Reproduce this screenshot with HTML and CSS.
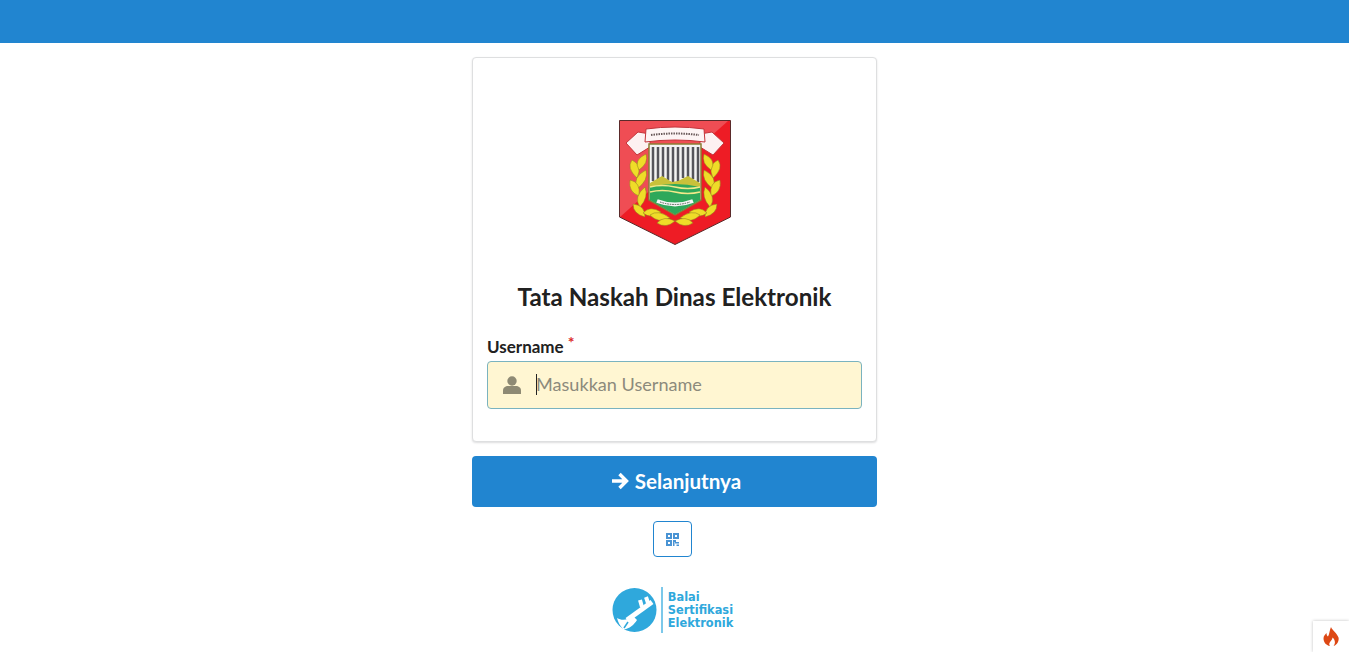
FILE: index.html
```html
<!DOCTYPE html>
<html lang="en">
  <head>
    <meta charset="UTF-8" />
    <meta name="viewport" content="width=device-width, initial-scale=1.0" />
    <title>Tata Naskah Dinas Elektronik</title>
    <link rel="stylesheet" href="styles.css">
  </head>
  <body>
    <div class="topbar"></div>
    <div class="container">
      <div class="card">
        <div class="crest">
          <svg width="150" height="150" viewBox="0 0 150 150">
            <path d="M19.500 15.500H130.500V112L75 139.500 19.500 112Z" fill="#ee1c25" stroke="#5a2a2a" stroke-width="1"/>
            <path d="M20 16H128L20 112Z" fill="#ef4d54"/>
            <!-- ribbon -->
            <path d="M26 38L38 27 50 29 50 42 37 50Z" fill="#fdf1f1" stroke="#c2343a" stroke-width="1"/>
            <path d="M124 38L112 27 100 29 100 42 113 50Z" fill="#fdf1f1" stroke="#c2343a" stroke-width="1"/>
            <path d="M46 24Q75 20 104 24L105 37Q75 33 45 37Z" fill="#fdf4f4" stroke="#c2343a" stroke-width="1"/>
            <path d="M51 30Q75 27 99 30" fill="none" stroke="#6a5a5a" stroke-width="2" stroke-dasharray="1.500 1"/>
            <!-- inner shield -->
            <path d="M49 39H101V95L75 110 49 95Z" fill="#f4f4f4" stroke="#8a7d35" stroke-width="1.500"/>
            <path d="M53 42V76M58 42V74M63 42V72M68 42V75M73 42V77M78 42V77M83 42V73M88 42V72M93 42V74M98 42V77" stroke="#55555c" stroke-width="2.500"/>
            <path d="M50 78L62 71 72 77 78 76 88 71 100 78V84H50Z" fill="#c9c13a"/>
            <path d="M50 82Q75 76 100 82V95L75 109.500 50 95Z" fill="#2ea85a"/>
            <path d="M50 82Q62 79 75 82T100 82M50 87Q62 84 75 87T100 87" fill="none" stroke="#f3e98a" stroke-width="1.500"/>
            <path d="M57 96Q75 103 93 96" fill="none" stroke="#f5f5f5" stroke-width="4"/>
            <path d="M60 97Q75 102 90 97" fill="none" stroke="#4a5a4a" stroke-width="1" stroke-dasharray="1.500 1"/>
            <!-- leaves -->
            <g fill="#efdc28" stroke="#8a7a20" stroke-width="0.500">
              <path d="M37 73Q26 63 32 55 43 60 37 73Z"/>
              <path d="M39 65Q33 55 46 49 49 58 39 65Z"/>
              <path d="M37 84Q32 72 46 65 49 75 37 84Z"/>
              <path d="M39 91Q28 87 30 75 41 77 39 91Z"/>
              <path d="M40 102Q33 92 45 82 49 92 40 102Z"/>
              <path d="M45 112Q33 109 33 99 45 100 45 112Z"/>
              <path d="M113 73Q124 63 118 55 107 60 113 73Z"/>
              <path d="M111 65Q117 55 104 49 101 58 111 65Z"/>
              <path d="M113 84Q118 72 104 65 101 75 113 84Z"/>
              <path d="M111 91Q122 87 120 75 109 77 111 91Z"/>
              <path d="M110 102Q117 92 105 82 101 92 110 102Z"/>
              <path d="M105 112Q117 109 117 99 105 100 105 112Z"/>
              <path d="M43 108Q50 100 61 107 52 115 43 108Z"/>
              <path d="M50 110Q58 104 70 113 58 119 50 110Z"/>
              <path d="M57 118Q64 110 75 116 66 124 57 118Z"/>
              <path d="M107 108Q100 100 89 107 98 115 107 108Z"/>
              <path d="M100 110Q92 104 80 113 92 119 100 110Z"/>
              <path d="M93 118Q86 110 75 116 84 124 93 118Z"/>
            </g>
          </svg>
        </div>
        <h1>Tata Naskah Dinas Elektronik</h1>
        <label class="field-label" for="username">Username<span class="required">*</span></label>
        <div class="input-wrap">
          <svg class="input-icon" width="18" height="18" viewBox="0 0 18 18">
            <circle cx="9" cy="5" r="4.700" fill="#8e8a74"/>
            <path d="M0 18V14.500C0 11.500 2.500 10 5 10H13C15.500 10 18 11.500 18 14.500V18Z" fill="#8e8a74"/>
          </svg>
          <input id="username" type="text" placeholder="Masukkan Username" autofocus />
          <span class="caret"></span>
        </div>
      </div>

      <button class="next-btn">
        <svg width="18" height="18" viewBox="0 0 18 18">
          <path d="M1 9H15M8.500 2L15.500 9 8.500 16" fill="none" stroke="#fff" stroke-width="3.400"/>
        </svg>
        Selanjutnya
      </button>

      <button class="qr-btn" aria-label="QR">
        <svg width="13" height="13" viewBox="0 0 13 13">
          <path d="M0 0H6V6H0ZM2 2V4H4V2ZM7 0H13V6H7ZM9 2V4H11V2ZM0 7H6V13H0ZM2 9V11H4V9Z" fill="#4a94d4" fill-rule="evenodd"/>
          <path d="M7 7H10V9H13V10.500H9V9H8.500V13H7ZM10.500 11.500H13V13H10.500Z" fill="#4a94d4"/>
        </svg>
      </button>

      <div class="bsre">
        <svg width="45" height="46" viewBox="0 0 45 46">
          <circle cx="22.500" cy="23" r="22" fill="#2fa8dc"/>
          <path d="M15 33L40 15" stroke="#fff" stroke-width="5"/>
          <path d="M30 20L28 13M36 16L34 10" stroke="#fff" stroke-width="4"/>
          <path d="M5 31C10 34 16 33 21 29L25 33C22 38 16 43 11 42 8 39 6 35 5 31Z" fill="#fff"/>
          <path d="M12 41L16 35" stroke="#2fa8dc" stroke-width="1.500"/>
        </svg>
        <div class="bsre-line"></div>
        <div class="bsre-text">Balai<br>Sertifikasi<br>Elektronik</div>
      </div>
    </div>

    <div class="corner-badge">
      <svg width="16" height="19" viewBox="0 0 16 19">
        <path d="M8 0C9 3 14 6 15.500 10.500 16.500 15 13 18.500 10.500 19 12.500 16.500 12.500 13 9.500 10.500 9.500 13 7.500 13.500 6.500 16 6 17.500 6.500 18.500 7 19 3 18.500 0.500 15 0.500 11.500 0.500 9 2 7.500 3.500 6 3.500 8 4 9 5 9.500 6.500 7 6.500 3 8 0Z" fill="#dd4814"/>
      </svg>
    </div>
  </body>
</html>
```

FILE: styles.css
```css
* {
  box-sizing: border-box;
}

body {
  font-family: Lato, "Liberation Sans", sans-serif;
  background-color: #fff;
  color: #212121;
  margin: 0;
}

.topbar {
  height: 43px;
  background-color: #2185d0;
}

.container {
  width: 405px;
  margin: 14px auto 0;
  display: flex;
  flex-direction: column;
  align-items: center;
}

.card {
  width: 100%;
  height: 385px;
  padding: 47px 14px 0;
  background-color: #fff;
  border: 1px solid #dedfe0;
  border-radius: 4px;
  box-shadow: 0 1px 2px rgba(34, 36, 38, 0.15);
}

.crest {
  display: flex;
  justify-content: center;
  height: 150px;
}

h1 {
  margin: 26px 0 0;
  font-size: 24.200px;
  line-height: 32px;
  font-weight: 700;
  text-align: center;
}

.field-label {
  display: block;
  margin-top: 21px;
  font-size: 17px;
  line-height: 23px;
  font-weight: 700;
}

.required {
  color: #db2828;
  font-size: 16px;
  margin-left: 4px;
  vertical-align: 5px;
  line-height: 1;
}

.input-wrap {
  position: relative;
  display: flex;
  align-items: center;
  gap: 15px;
  height: 48px;
  margin-top: 3px;
  padding-left: 15px;
  background-color: #fff6d2;
  border: 1px solid #7ab3bf;
  border-radius: 4px;
}

.input-wrap input {
  flex: 1;
  min-width: 0;
  border: 0;
  outline: 0;
  padding: 0 0 3px;
  background: transparent;
  font-family: inherit;
  font-size: 18.100px;
  color: #212121;
  caret-color: transparent;
}

.input-wrap input::placeholder {
  color: #8c8a7c;
  opacity: 1;
}

.caret {
  position: absolute;
  left: 48px;
  top: 12px;
  width: 1px;
  height: 21px;
  background-color: #222;
}

.next-btn {
  width: 100%;
  height: 51px;
  margin-top: 14px;
  display: flex;
  align-items: center;
  justify-content: center;
  gap: 6px;
  padding: 0 0 2px 3px;
  border: 0;
  border-radius: 4px;
  background-color: #2185d0;
  color: #fff;
  font-family: inherit;
  font-size: 20.600px;
  font-weight: 700;
}

.qr-btn {
  width: 39px;
  height: 36px;
  margin: 14px 4px 0 0;
  display: flex;
  align-items: center;
  justify-content: center;
  padding: 0;
  background-color: #fff;
  border: 1px solid #2185d0;
  border-radius: 4px;
}

.bsre {
  display: flex;
  align-items: center;
  margin: 30px 4px 0 0;
  height: 46px;
}

.bsre-line {
  width: 2px;
  height: 46px;
  margin: 0 5px 0 4px;
  background-color: #7cc8ea;
}

.bsre-text {
  font-family: "DejaVu Sans", sans-serif;
  font-size: 11.400px;
  line-height: 13px;
  font-weight: 700;
  color: #2fa8dc;
}

.corner-badge {
  position: fixed;
  right: 0;
  bottom: 0;
  width: 36px;
  height: 31px;
  display: flex;
  align-items: center;
  justify-content: center;
  background-color: #fff;
  box-shadow: 0 0 3px rgba(0, 0, 0, 0.25);
}
```
